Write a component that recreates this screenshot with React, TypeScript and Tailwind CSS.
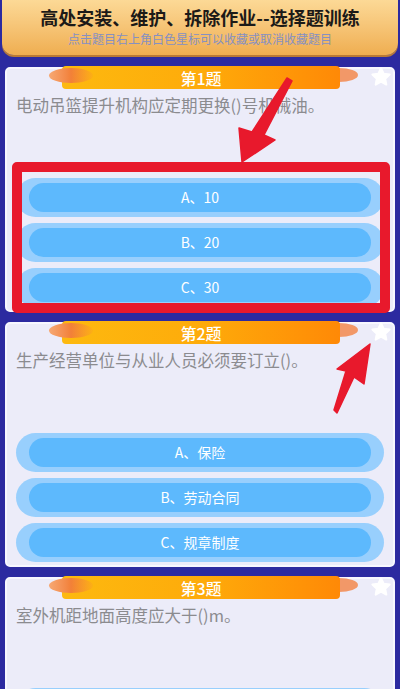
const questions = [
  { no: 1, text: '电动吊篮提升机构应定期更换()号机械油。', options: ['A、10', 'B、20', 'C、30'] },
  { no: 2, text: '生产经营单位与从业人员必须要订立()。', options: ['A、保险', 'B、劳动合同', 'C、规章制度'] },
  // options of the third card sit below the fold
  { no: 3, text: '室外机距地面高度应大于()m。', options: ['', '', ''] },
];

const Star = () => (
  <svg width="22" height="22" viewBox="0 0 24 24" className="absolute right-[1px] top-[-3px]">
    <path
      d="M12 2.5l2.9 6 6.5.8-4.8 4.5 1.2 6.5L12 17.1l-5.8 3.2 1.2-6.5-4.8-4.5 6.5-.8z"
      fill="#ffffff"
      stroke="#ffffff"
      strokeWidth="2.2"
      strokeLinejoin="round"
    />
  </svg>
);

const Ribbon = ({ no }: { no: number }) => (
  <div className="absolute left-[42px] right-[35px] top-[-3px] h-[23px]">
    {/* curled ends */}
    <div className="absolute right-0 top-[2px] h-[14px] w-[38px] rounded-[50%] bg-[#f29868]" />
    <div className="absolute left-[13px] right-[18px] top-0 h-[23px] rounded-[4px] bg-gradient-to-r from-[#fdb90f] via-[#feab0a] to-[#ff8906] flex items-center justify-center">
      <span className="text-[16px] leading-none font-medium text-white">第{no}题</span>
    </div>
    <div className="absolute left-0 top-[2px] h-[15px] w-[44px] rounded-[50%] bg-gradient-to-r from-[#f6a873] via-[#f28038] to-[#fca71a]/40" />
  </div>
);

const Option = ({ label }: { label: string }) => (
  <div className="h-[39px] rounded-full bg-[#98cffd] px-[13px] py-[5px] flex">
    <div className="flex-1 rounded-full bg-[#5db9fd] flex items-center justify-center">
      {label && <span className="text-[14px] text-white">{label}</span>}
    </div>
  </div>
);

export default function App() {
  return (
    <div
      className="relative w-[400px] h-[689px] overflow-hidden bg-[#2c2aa0]"
      style={{ fontFamily: '"Noto Sans CJK SC", "Noto Sans", sans-serif' }}
    >
      {/* Header */}
      <div className="mx-[2px] h-[55px] rounded-b-[12px] bg-gradient-to-b from-[#fcd996] to-[#efae50] shadow-[0_2px_0_#b97a36] flex flex-col items-center pt-[5px]">
        <h1 className="text-[18px] leading-[24px] font-bold text-[#1c1a18]">高处安装、维护、拆除作业--选择题训练</h1>
        <p className="mt-[2px] text-[12px] leading-[16px] text-[#8690c2]">点击题目右上角白色星标可以收藏或取消收藏题目</p>
      </div>

      {/* Questions */}
      <div className="flex flex-col gap-[10px] px-[5px] mt-[12px]">
        {questions.map((q) => (
          <div
            key={q.no}
            className="relative h-[245px] rounded-[5px] border-2 border-[#f7f7ff] bg-[#ececf9] px-[9px] pt-[24px] pb-[6px]"
          >
            <Ribbon no={q.no} />
            <Star />
            <p className="text-[16.5px] leading-[24px] text-[#8b8b8f]">{q.text}</p>
            <div className="mt-[61px] flex flex-col gap-[6px]">
              {q.options.map((o, i) => (
                <Option key={i} label={o} />
              ))}
            </div>
            {q.no === 1 && (
              <div className="absolute left-[5px] right-[3px] top-[93px] bottom-[-3px] rounded-[5px] border-[10px] border-[#e8192c]" />
            )}
          </div>
        ))}
      </div>

      {/* Annotation arrows */}
      <svg className="absolute left-0 top-0" width="400" height="689" viewBox="0 0 400 689">
        <polygon
          points="287,78 292,81 264,135 275,140 242,162 239,128 252,132"
          fill="#e8192c"
          stroke="#e8192c"
          strokeWidth="1.5"
          strokeLinejoin="round"
        />
        <polygon
          points="370,344 364,384 354,377 337,413 334,410 346,371 337,369"
          fill="#e8192c"
          stroke="#e8192c"
          strokeWidth="1.5"
          strokeLinejoin="round"
        />
      </svg>
    </div>
  );
}
